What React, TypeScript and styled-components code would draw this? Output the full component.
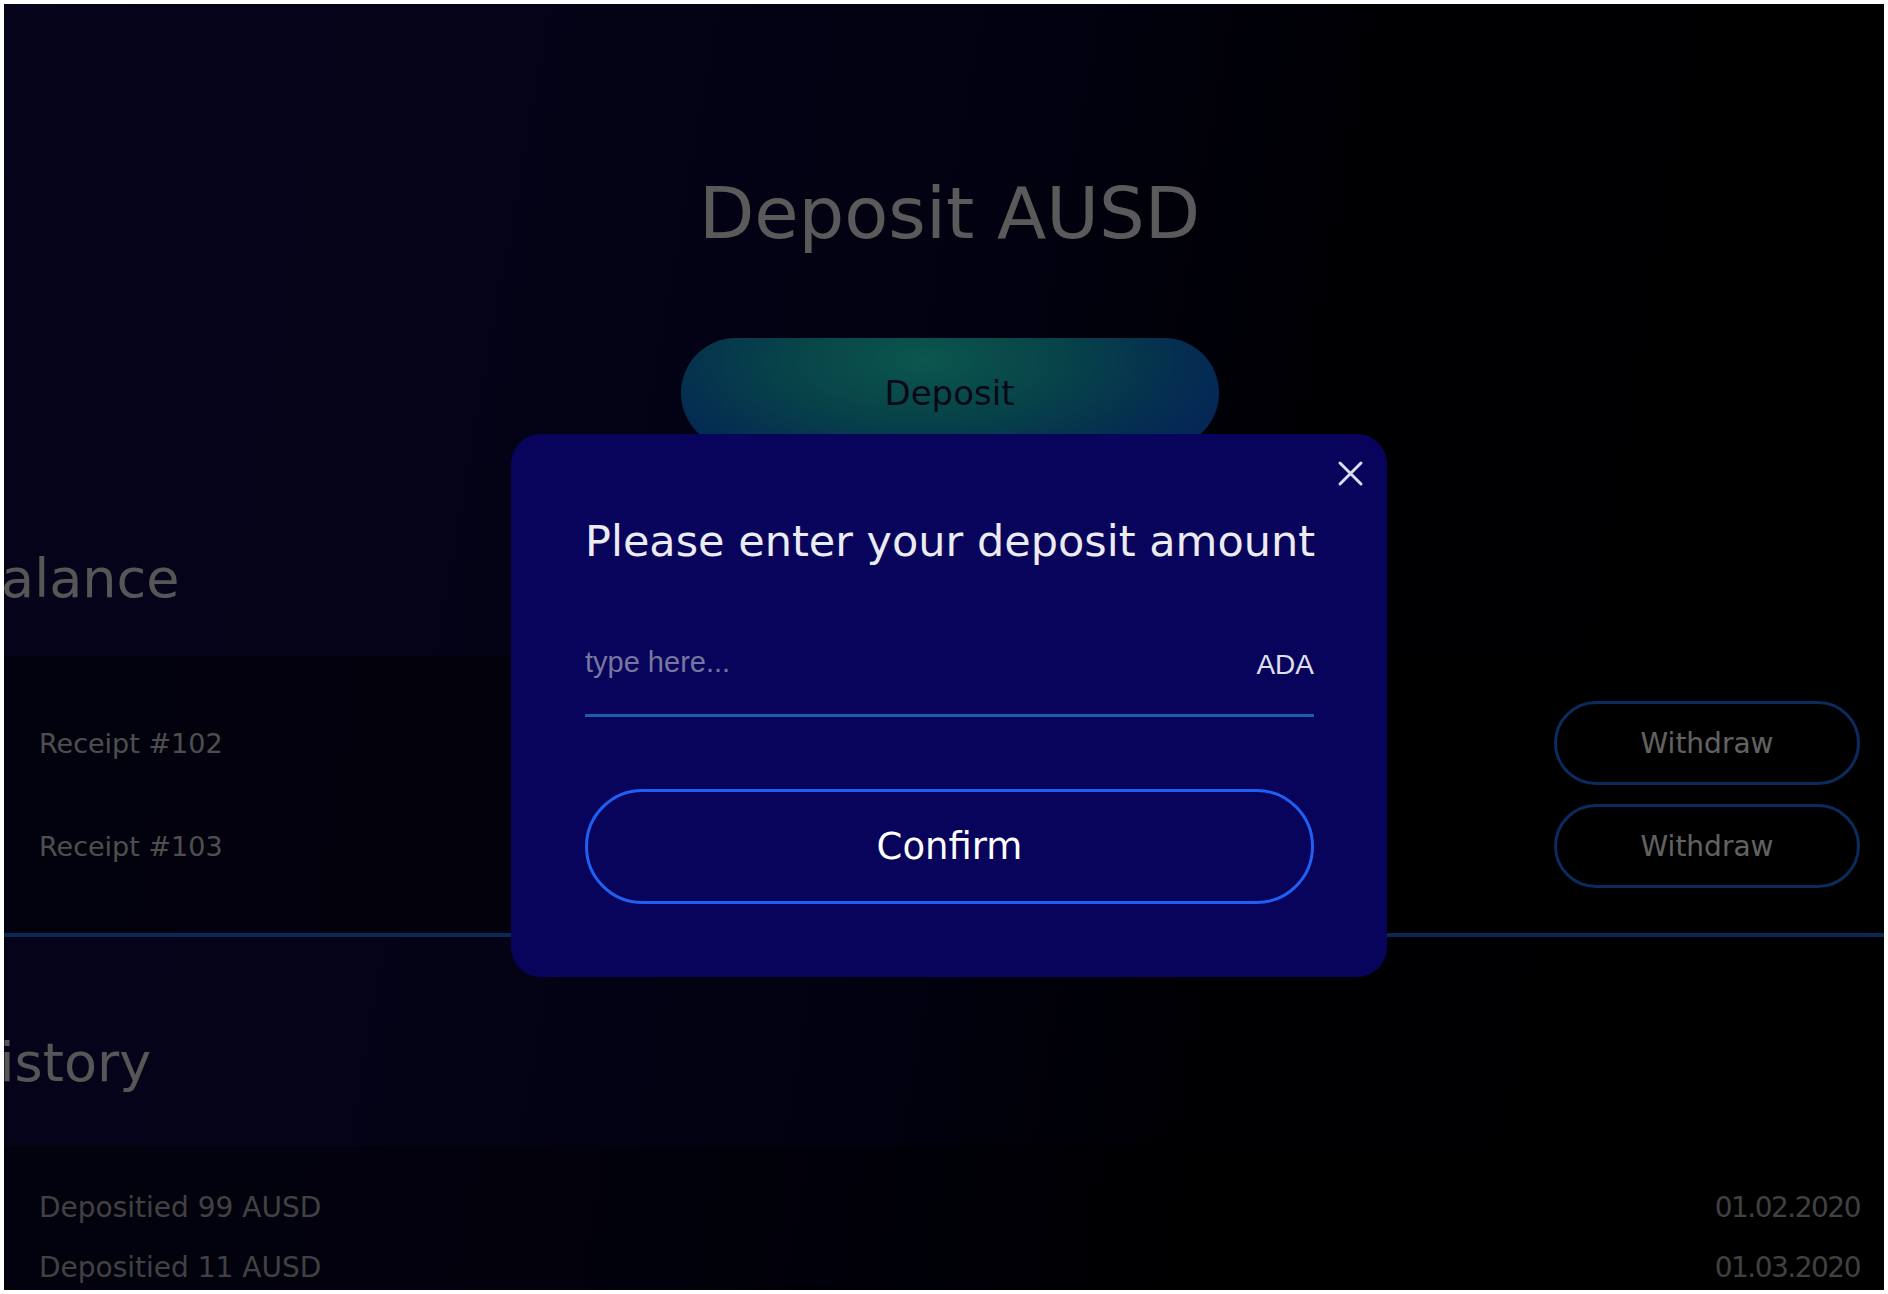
import React from "react";
import styled, { createGlobalStyle } from "styled-components";

const GlobalStyle = createGlobalStyle`
    html, body {
        margin: 0;
        padding: 0;
        background: #ffffff;
    }
    * {
        box-sizing: border-box;
    }
`;

const HEADING_FONT = `"DejaVu Sans", "Noto Sans", sans-serif`;
const FIELD_FONT = `"Liberation Sans", Arial, sans-serif`;

const Frame = styled.div`
    position: relative;
    width: 1888px;
    height: 1294px;
    border: 4px solid #ffffff;
    overflow: hidden;
`;

const Page = styled.main`
    height: 100%;
    display: flex;
    flex-direction: column;
    padding: 173px 24px 0 35px;
    background: linear-gradient(
        100deg,
        #0e0a46 0%,
        #0b0838 30%,
        #05042a 50%,
        #010108 66%,
        #000000 100%
    );
    font-family: ${HEADING_FONT};
`;

const Hero = styled.section`
    display: flex;
    flex-direction: column;
    align-items: center;
`;

const Title = styled.h1`
    margin: 0;
    font-size: 72px;
    line-height: 1;
    font-weight: 400;
    color: #e2e2e2;
`;

const DepositButton = styled.button`
    margin-top: 89px;
    width: 538px;
    height: 110px;
    border: none;
    border-radius: 55px;
    background: radial-gradient(
        ellipse 60% 120% at 45% 20%,
        #1ed7c2 0%,
        #12a6b6 45%,
        #0d74c8 80%,
        #0b62d8 100%
    );
    font-family: ${HEADING_FONT};
    font-size: 34px;
    color: #14143a;
`;

const Section = styled.section<{ $grow?: boolean }>`
    display: flex;
    flex-direction: column;
    flex: ${(p) => (p.$grow ? 1 : "none")};
`;

const SectionTitle = styled.h2<{ $gap: number; $shift: number }>`
    margin: ${(p) => p.$gap}px 0 0 ${(p) => p.$shift}px;
    font-size: 54px;
    line-height: 1;
    font-weight: 400;
    color: #d8d8d8;
`;

const ListPanel = styled.div`
    margin: 50px -24px 0 -35px;
    padding: 45px 24px 45px 35px;
    display: flex;
    flex-direction: column;
    gap: 19px;
    background: rgba(0, 0, 0, 0.45);
    border-bottom: 4px solid #1a62d8;
`;

const ReceiptRow = styled.div`
    height: 84px;
    display: flex;
    align-items: center;
    justify-content: space-between;
`;

const ReceiptLabel = styled.span`
    font-size: 27px;
    color: #c4c4c4;
`;

const WithdrawButton = styled.button`
    width: 306px;
    height: 84px;
    border: 3px solid #1c6ae8;
    border-radius: 42px;
    background: transparent;
    font-family: ${HEADING_FONT};
    font-size: 28px;
    color: #f4f4f4;
`;

const HistoryPanel = styled.div`
    margin: 56px -24px 0 -35px;
    padding: 42px 24px 0 35px;
    flex: 1;
    display: flex;
    flex-direction: column;
    gap: 20px;
    background: rgba(0, 0, 0, 0.4);
`;

const HistoryRow = styled.div`
    display: flex;
    justify-content: space-between;
    font-size: 28px;
    line-height: 40px;
    color: #a2a2a2;
`;

const HistoryDate = styled.span`
    letter-spacing: -1.5px;
`;

const Backdrop = styled.div`
    position: absolute;
    inset: 0;
    display: flex;
    justify-content: center;
    align-items: flex-start;
    padding: 430px 0 0 10px;
    background: rgba(0, 0, 0, 0.6);
`;

const Modal = styled.div`
    position: relative;
    width: 876px;
    height: 543px;
    padding: 86px 73px 0 74px;
    display: flex;
    flex-direction: column;
    border-radius: 30px;
    background: #08045c;
    font-family: ${HEADING_FONT};
`;

const CloseButton = styled.button`
    position: absolute;
    top: 26px;
    right: 23px;
    width: 27px;
    height: 27px;
    padding: 0;
    border: none;
    background: transparent;
    display: flex;
`;

const ModalTitle = styled.h3`
    margin: 0;
    font-size: 43px;
    line-height: 1;
    font-weight: 400;
    color: #ebebf2;
    white-space: nowrap;
`;

const AmountField = styled.label`
    margin-top: 79px;
    padding-bottom: 29px;
    display: flex;
    align-items: flex-start;
    justify-content: space-between;
    border-bottom: 3px solid #1c5cab;
`;

const AmountInput = styled.input`
    flex: 1;
    height: 40px;
    padding: 0;
    border: none;
    outline: none;
    background: transparent;
    font-family: ${FIELD_FONT};
    font-size: 29px;
    color: #ffffff;

    &::placeholder {
        color: #77769f;
    }
`;

const Currency = styled.span`
    margin-top: 3px;
    font-family: ${FIELD_FONT};
    font-size: 28px;
    line-height: 40px;
    color: #dedeec;
`;

const ConfirmButton = styled.button`
    margin-top: 72px;
    height: 115px;
    border: 3px solid #1f5ff2;
    border-radius: 58px;
    background: transparent;
    font-family: ${HEADING_FONT};
    font-size: 37px;
    color: #ffffff;
`;

const receipts = ["Receipt #102", "Receipt #103"];
const history = [
    { text: "Depositied 99 AUSD", date: "01.02.2020" },
    { text: "Depositied 11 AUSD", date: "01.03.2020" },
];

const App = () => {
    return (
        <>
            <GlobalStyle />
            <Frame>
                <Page>
                    <Hero>
                        <Title>Deposit AUSD</Title>
                        <DepositButton>Deposit</DepositButton>
                    </Hero>
                    <Section>
                        <SectionTitle $gap={104} $shift={-75}>
                            Balance
                        </SectionTitle>
                        <ListPanel>
                            {receipts.map((r) => (
                                <ReceiptRow key={r}>
                                    <ReceiptLabel>{r}</ReceiptLabel>
                                    <WithdrawButton>Withdraw</WithdrawButton>
                                </ReceiptRow>
                            ))}
                        </ListPanel>
                    </Section>
                    <Section $grow>
                        <SectionTitle $gap={99} $shift={-80}>
                            History
                        </SectionTitle>
                        <HistoryPanel>
                            {history.map((h) => (
                                <HistoryRow key={h.date}>
                                    <span>{h.text}</span>
                                    <HistoryDate>{h.date}</HistoryDate>
                                </HistoryRow>
                            ))}
                        </HistoryPanel>
                    </Section>
                </Page>
                <Backdrop>
                    <Modal>
                        <CloseButton aria-label="Close">
                            <svg width="27" height="27" viewBox="0 0 27 27">
                                <path
                                    d="M3 3 L24 24 M24 3 L3 24"
                                    stroke="#dcdcec"
                                    strokeWidth="3"
                                    strokeLinecap="round"
                                />
                            </svg>
                        </CloseButton>
                        <ModalTitle>Please enter your deposit amount</ModalTitle>
                        <AmountField>
                            <AmountInput placeholder="type here..." />
                            <Currency>ADA</Currency>
                        </AmountField>
                        <ConfirmButton>Confirm</ConfirmButton>
                    </Modal>
                </Backdrop>
            </Frame>
        </>
    );
};

export default App;
